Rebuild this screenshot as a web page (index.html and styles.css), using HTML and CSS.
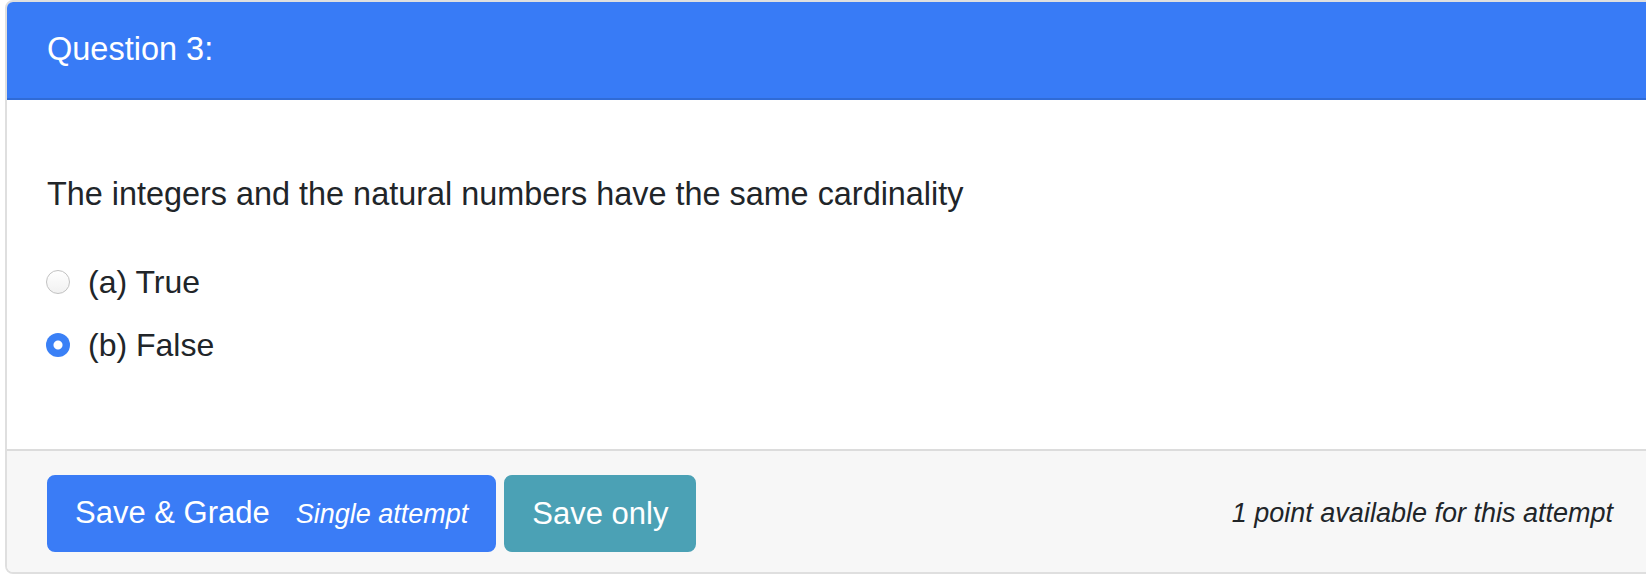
FILE: index.html
```html
<!DOCTYPE html>
<html lang="en">

<head>
    <meta charset="UTF-8">
    <meta name="viewport" content="width=device-width, initial-scale=1.0">
    <title>Question 3</title>
    <link rel="stylesheet" href="styles.css">
</head>

<body>
    <div class="card">
        <div class="card-header">Question 3:</div>

        <div class="card-body">
            <p class="question">The integers and the natural numbers have the same cardinality</p>

            <div class="options">
                <label class="option">
                    <input type="radio" name="q3" value="a">
                    <span>(a) True</span>
                </label>
                <label class="option">
                    <input type="radio" name="q3" value="b" checked>
                    <span>(b) False</span>
                </label>
            </div>
        </div>

        <div class="card-footer">
            <div class="actions">
                <button type="button" class="btn btn-primary">Save &amp; Grade<span class="btn-note">Single attempt</span></button>
                <button type="button" class="btn btn-info">Save only</button>
            </div>
            <span class="points">1 point available for this attempt</span>
        </div>
    </div>
</body>

</html>
```

FILE: styles.css
```css
* {
    margin: 0;
    padding: 0;
    box-sizing: border-box;
    font-family: 'Liberation Sans', Arial, Helvetica, sans-serif;
}

body {
    background: #ffffff;
    color: #212529;
    line-height: 1.5;
    overflow: hidden;
}

.card {
    width: 1650px;
    margin-left: 5px;
    border: 2px solid #dfdfdf;
    border-radius: 8px;
    overflow: hidden;
    background: #ffffff;
}

.card-header {
    background: #387bf6;
    color: #ffffff;
    font-size: 32.5px;
    line-height: 48px;
    padding: 23px 40px 25px;
    border-bottom: 2px solid #306bd6;
}

.card-body {
    padding: 70px 40px 80px;
}

.question {
    font-size: 32.4px;
    line-height: 48px;
    margin-bottom: 40px;
}

.options {
    display: flex;
    flex-direction: column;
    gap: 15px;
}

.option {
    display: flex;
    align-items: center;
    gap: 18px;
    font-size: 32px;
    line-height: 48px;
    cursor: pointer;
}

.option input {
    appearance: none;
    -webkit-appearance: none;
    width: 24px;
    height: 24px;
    margin-left: -1px;
    border-radius: 50%;
    border: 1px solid #c2c2c2;
    background: linear-gradient(#ffffff, #f1f1f1);
    flex-shrink: 0;
}

.option input:checked {
    border: none;
    background: radial-gradient(circle, #ffffff 0 4px, #3a80f6 5px);
}

.card-footer {
    display: flex;
    align-items: center;
    justify-content: space-between;
    background: #f7f7f7;
    border-top: 2px solid #dcdcdc;
    padding: 24px 40px 20px;
}

.actions {
    display: flex;
    gap: 8px;
}

.btn {
    border: 2px solid transparent;
    border-radius: 8px;
    padding: 12px 26px;
    font-size: 31px;
    line-height: 48px;
    color: #ffffff;
    cursor: pointer;
}

.btn-primary {
    background: #3a7cf6;
    border-color: #3a7cf6;
}

.btn-info {
    background: #4ba1b5;
    border-color: #4ba1b5;
}

.btn-note {
    font-style: italic;
    font-size: 27px;
    margin-left: 26px;
}

.points {
    font-style: italic;
    font-size: 27px;
    color: #212529;
}
```
